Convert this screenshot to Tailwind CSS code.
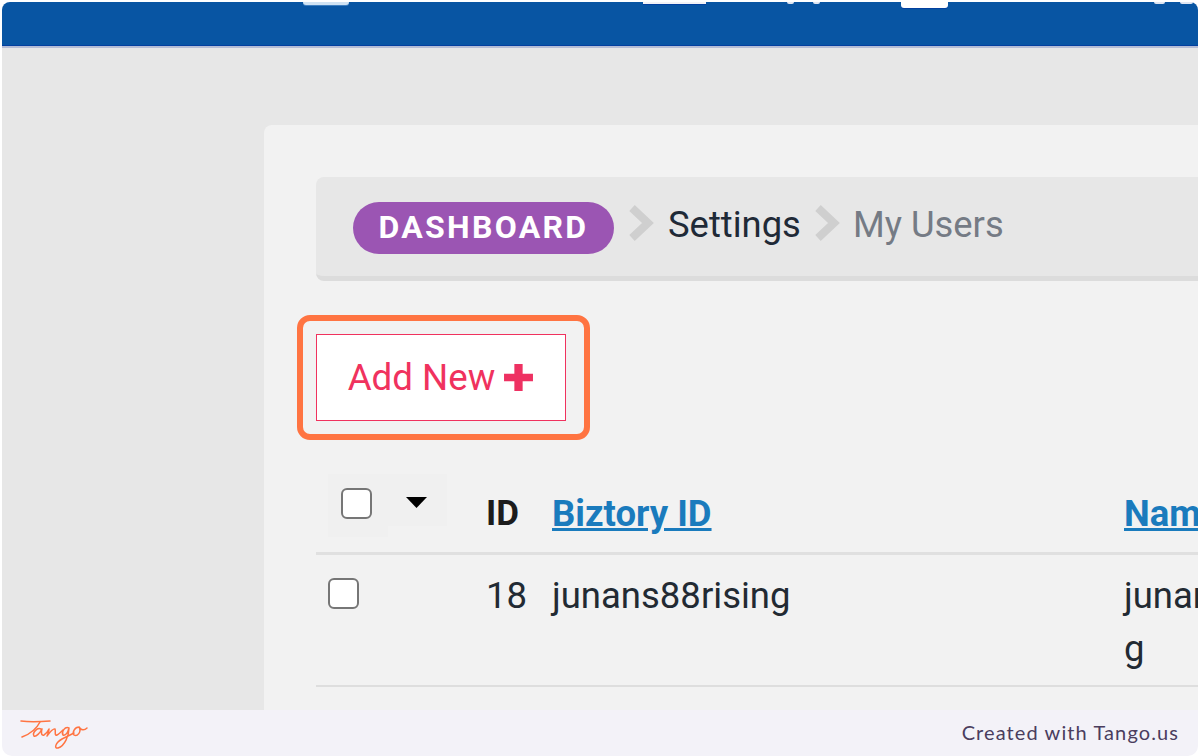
<!DOCTYPE html>
<html lang="en">

<head>
    <meta charset="UTF-8">
    <meta name="viewport" content="width=device-width, initial-scale=1.0">
    <title>My Users</title>
    <script src="https://cdn.jsdelivr.net/npm/@tailwindcss/browser@4"></script>
</head>

<body class="bg-white font-['Roboto',sans-serif]">
    <div class="w-[1200px] h-[756px] overflow-hidden flex flex-col pt-[2px] px-[2px] bg-white">
        <div class="flex-1 min-h-0 flex flex-col overflow-hidden">
            <!-- top bar -->
            <div class="h-[44px] shrink-0 bg-[#0855a3] rounded-t-[8px] border-b-[1px] border-[#0340a0] flex items-start">
                <div class="ml-[301px] w-[46px] h-[3px] rounded-b-[3px] bg-[#cfe2f3] shadow-[0_1px_0_#3f7fc0]"></div>
                <div class="ml-[294px] w-[63px] h-[2px] bg-[#f2f2f6] shadow-[0_1px_0_#0340a0]"></div>
                <div class="ml-[81px] w-[7px] h-[2px] rounded-b-full bg-[#dfe6f2]"></div>
                <div class="ml-[19px] w-[7px] h-[2px] rounded-b-full bg-[#dfe6f2]"></div>
                <div class="ml-[81px] w-[47px] h-[6px] rounded-b-[3px] bg-white shadow-[0_1px_0_#0340a0]"></div>
                <div class="ml-[206px] w-[11px] h-[2px] rounded-b-full bg-[#dfe6f2]"></div>
                <div class="ml-[15px] w-[13px] h-[2px] rounded-b-full bg-[#dfe6f2]"></div>
            </div>
            <div class="h-[2px] shrink-0 bg-[#b5bdd6]"></div>

            <!-- main area -->
            <div class="flex-1 min-h-0 bg-[#e7e7e7] pl-[262px] pt-[77px] overflow-hidden">
                <div class="h-full bg-[#f2f2f2] rounded-tl-[8px] pl-[52px] pt-[52px] overflow-hidden">
                    <!-- breadcrumb -->
                    <div class="h-[104px] bg-[#e7e7e7] rounded-l-[8px] border-b-[5px] border-[#dcdcdc] flex items-center pl-[37px] pt-[3px]">
                        <span class="h-[52px] w-[261px] pb-[3px] rounded-full bg-[#9b55b3] text-white font-bold text-[32px] tracking-[2.3px] flex items-center justify-center">DASHBOARD</span>
                        <svg class="ml-[14px] mb-[10px] w-[26px] h-[36px]" viewBox="0 0 26 36" fill="none"><path d="M4 3 L20 18 L4 33" stroke="#cfcfcf" stroke-width="8"/></svg>
                        <span class="ml-[14px] mb-[6px] text-[36.4px] text-[#1f2a37]">Settings</span>
                        <svg class="ml-[13px] mb-[10px] w-[26px] h-[36px]" viewBox="0 0 26 36" fill="none"><path d="M4 3 L20 18 L4 33" stroke="#cfcfcf" stroke-width="8"/></svg>
                        <span class="ml-[13px] mb-[6px] text-[36.4px] text-[#757b85]">My Users</span>
                    </div>

                    <!-- add new button -->
                    <div class="relative mt-[53px] w-[250px] h-[87px]">
                        <button class="w-full h-full bg-white border border-[#f0325e] text-[#f0325e] text-[36.7px] flex items-center justify-center gap-[8px]">
                            <span>Add New</span>
                            <svg class="w-[31px] h-[29px]" viewBox="0 0 30 30" preserveAspectRatio="none"><path d="M11 1h8v10h10v8h-10v10h-8v-10h-10v-8h10z" fill="#ee3162"/></svg>
                        </button>
                        <div class="absolute left-[-19px] top-[-19px] w-[293px] h-[125px] border-[6px] border-[#ff7442] rounded-[13px]"></div>
                    </div>

                    <!-- table head -->
                    <div class="mt-[53px] h-[81px] flex border-b-[3px] border-[#e0e0e0]">
                        <div class="w-[170px] shrink-0 flex items-start pl-[12px]">
                            <div class="w-[60px] h-[63px] bg-[#f0f0f0] pl-[13px] pt-[14px]">
                                <span class="block w-[31px] h-[31px] bg-white border-[2px] border-[#767676] rounded-[6px]"></span>
                            </div>
                            <div class="w-[59px] h-[52px] bg-[#f0f0f0] pl-[18px] pt-[23px]">
                                <svg class="w-[21px] h-[11px]" viewBox="0 0 20 11" preserveAspectRatio="none"><path d="M0 0h20L10 11z" fill="#000"/></svg>
                            </div>
                        </div>
                        <div class="w-[66px] shrink-0 pt-[18px] text-[35px] font-bold leading-[44px] text-[#1c1c1c]">ID</div>
                        <div class="w-[572px] shrink-0 pt-[18px] text-[36.5px] font-bold leading-[44px] text-[#1a7bbd] underline">Biztory ID</div>
                        <div class="pt-[18px] text-[36.5px] font-bold leading-[44px] text-[#1a7bbd] underline">Name</div>
                    </div>

                    <!-- table row -->
                    <div class="h-[132px] flex border-b-[2px] border-[#dedede] text-[36.5px] text-[#222a33] leading-[53px]">
                        <div class="w-[170px] shrink-0 pl-[12px] pt-[23px]">
                            <span class="block w-[31px] h-[31px] bg-white border-[2px] border-[#767676] rounded-[6px]"></span>
                        </div>
                        <div class="w-[66px] shrink-0 pt-[14px]">18</div>
                        <div class="w-[572px] shrink-0 pt-[14px]">junans88rising</div>
                        <div class="w-[222px] shrink-0 pt-[14px] break-all">junans88rising</div>
                    </div>
                </div>
            </div>
        </div>

        <!-- tango footer -->
        <div class="h-[46px] shrink-0 bg-[#f3f2f8] rounded-b-[10px] flex items-center justify-between pl-[18px] pr-[19px]">
            <svg class="w-[70px] h-[34px] mt-[2px]" viewBox="0 0 70 34" fill="none" stroke="#ff7442" stroke-width="1.5" stroke-linecap="round" stroke-linejoin="round">
                <path d="M1 4 C8 5 18 5 30 4"/>
                <path d="M20 5 C17 11 10 17 2 20"/>
                <path d="M21 12 C17 10 12 16 14 19 C16 20 20 16 22 12 C21 15 21 19 24 18 C26 17 28 14 29 12 C29 14 28 17 27 19 C30 15 33 11 35 12 C36 14 34 19 37 18 C39 17 41 15 43 13"/>
                <path d="M49 11 C45 9 41 15 43 18 C46 19 48 15 49 11 C49 18 45 29 38 31 C34 32 35 26 42 22 C46 20 50 18 54 16"/>
                <path d="M59 10 C55 10 52 15 54 18 C57 20 62 15 59 10 C61 13 64 14 67 11"/>
            </svg>
            <span class="font-['Lato',sans-serif] mb-[3px] text-[20px] tracking-[1.1px] text-[#4a3d5e]">Created with Tango.us</span>
        </div>
    </div>
</body>

</html>
